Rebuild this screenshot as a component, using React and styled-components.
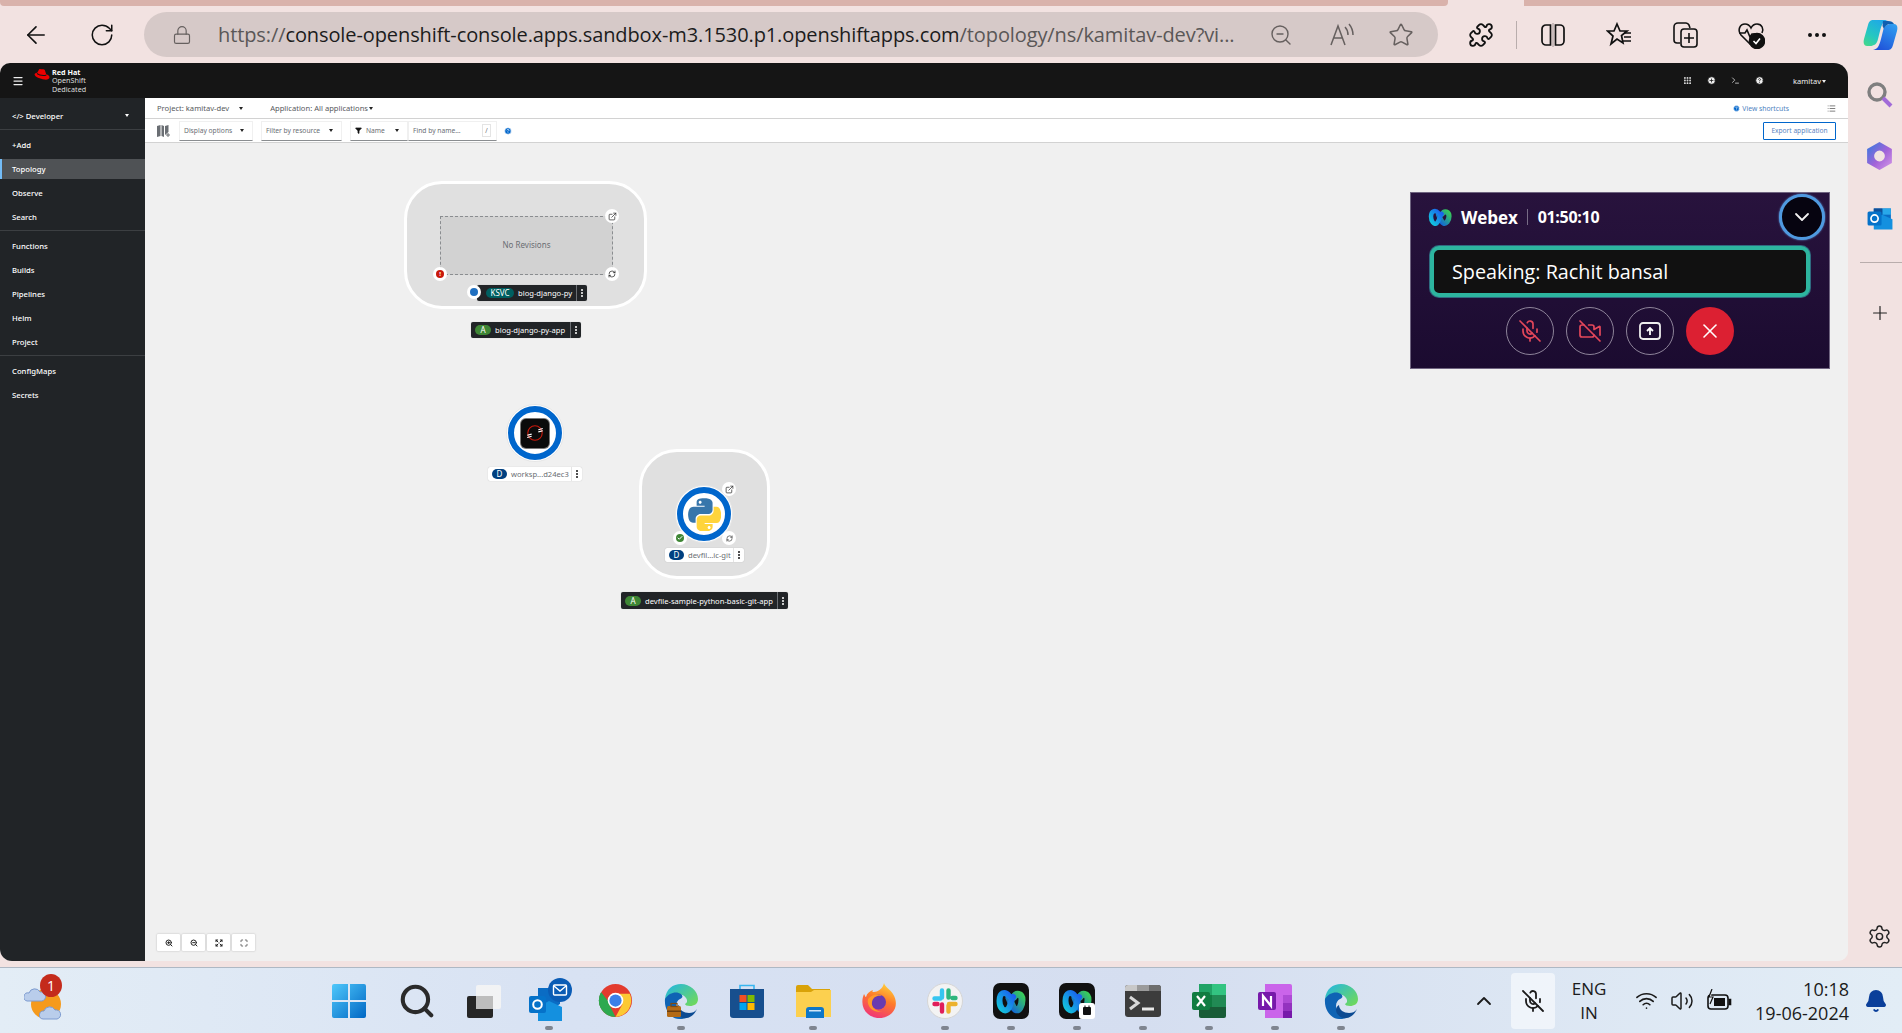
import React from 'react';
import styled, { createGlobalStyle } from 'styled-components';
import {
  ArrowLeft, RotateCw, Lock, ZoomOut, Star, Puzzle, MoreHorizontal, Search, Plus, Settings,
  ChevronDown, ChevronUp, MicOff, VideoOff, X, Wifi, Volume2, Bell, ExternalLink, Filter, Menu,
  Grip, CirclePlus, CircleHelp, Terminal, ZoomIn, Expand, Maximize, List, Check, RefreshCw,
} from 'lucide-react';

const GlobalStyle = createGlobalStyle`
  html, body { margin: 0; padding: 0; background: #f2e2e1; }
  * { box-sizing: border-box; }
  body { font-family: "Noto Sans", sans-serif; }
`;

const CONSOLE_FONT = `"Noto Sans", "Liberation Sans", sans-serif`;
const WIN_FONT = `"Open Sans", "Noto Sans", sans-serif`;

const Page = styled.div`
  width: 1902px;
  height: 1033px;
  display: flex;
  flex-direction: column;
  overflow: hidden;
  background: #f2e2e1;
`;

const TabStrip = styled.div`
  height: 6px;
  display: flex;
  justify-content: space-between;
  flex: none;
`;

const TabPiece = styled.div`
  width: ${p => p.$w}px;
  background: #d9b2ab;
  border-bottom-left-radius: ${p => (p.$left ? 4 : 0)}px;
  border-bottom-right-radius: ${p => (p.$left ? 4 : 0)}px;
`;

const BrowserBar = styled.div`
  height: 57px;
  flex: none;
  display: flex;
  align-items: center;
  padding: 0 0 0 3px;
  color: #111;
`;

const BarSlot = styled.div`
  width: ${p => p.$w || 66}px;
  height: 44px;
  flex: none;
  display: flex;
  align-items: center;
  justify-content: center;
`;

const AddressBar = styled.div`
  width: 1294px;
  height: 45px;
  margin: 0 10px 0 9px;
  flex: none;
  border-radius: 23px;
  background: #d6c9c8;
  display: flex;
  align-items: center;
  padding: 0 7px 0 28px;
  color: #66605f;
`;

const Url = styled.div`
  flex: 1;
  min-width: 0;
  padding-left: 26px;
  font: 20px ${WIN_FONT};
  letter-spacing: -0.1px;
  white-space: nowrap;
  color: #5a5757;
  span { color: #1c1c1c; }
`;

const BarDivider = styled.div`
  width: 1px;
  height: 28px;
  margin: 0 3px 0 2px;
  background: #b9adac;
  flex: none;
`;

const MainRow = styled.div`
  flex: 1;
  display: flex;
  min-height: 0;
`;

const ConsoleWindow = styled.div`
  width: 1848px;
  height: 898px;
  flex: none;
  display: flex;
  flex-direction: column;
  border-radius: 10px 14px 10px 12px;
  overflow: hidden;
  background: #f0f0f0;
  font-family: ${CONSOLE_FONT};
`;

const Masthead = styled.header`
  height: 35px;
  flex: none;
  background: #151515;
  color: #e8e8e8;
  display: flex;
  align-items: center;
  padding: 0 12px;
`;

const BrandRow = styled.div`
  display: flex;
  align-items: flex-start;
  margin-left: 10px;
`;

const BrandText = styled.div`
  display: flex;
  flex-direction: column;
  font-size: 7.2px;
  line-height: 8.4px;
  margin-left: 2px;
  color: #ddd;
  b { color: #fff; font-weight: 700; }
`;

const MastTools = styled.div`
  margin-left: auto;
  display: flex;
  align-items: center;
  gap: 15px;
  padding-right: 10px;
`;

const UserMenu = styled.div`
  margin-left: 14px;
  font-size: 7.5px;
  color: #eee;
`;

const ConsoleBody = styled.div`
  flex: 1;
  display: flex;
  min-height: 0;
`;

const SideNav = styled.nav`
  width: 145px;
  flex: none;
  background: #212427;
  color: #fff;
  font-size: 7.7px;
  font-weight: 500;
`;

const Perspective = styled.div`
  height: 32px;
  display: flex;
  align-items: center;
  justify-content: space-between;
  padding: 4px 16px 0 12px;
  border-bottom: 1px solid #3c3f42;
`;

const NavGroup = styled.div`
  padding: 3px 0 1px;
  border-bottom: ${p => (p.$last ? 'none' : '1px solid #3c3f42')};
`;

const NavItem = styled.div`
  height: 24px;
  display: flex;
  align-items: center;
  padding-left: 12px;
  ${p => p.$active && `
    height: 20px;
    margin: 2px 0;
    background: #4f5255;
    box-shadow: inset 2px 0 0 #73bcf7;
  `}
`;

const Workspace = styled.main`
  flex: 1;
  display: flex;
  flex-direction: column;
  min-width: 0;
`;

const ProjectBar = styled.div`
  height: 21px;
  flex: none;
  background: #fff;
  border-bottom: 1px solid #d2d2d2;
  display: flex;
  align-items: center;
  padding: 0 12px 0 12px;
  font-size: 7.6px;
  color: #56595d;
`;

const Caret = styled.span`
  display: inline-block;
  width: 0;
  height: 0;
  margin-left: ${p => p.$ml || 6}px;
  border: 2.5px solid transparent;
  border-top: 3px solid ${p => p.$color || '#222'};
  border-bottom: 0;
  vertical-align: middle;
`;

const AppSelect = styled.div`
  margin-left: 27px;
`;

const Shortcuts = styled.div`
  margin-left: auto;
  display: flex;
  align-items: center;
  gap: 2px;
  color: #4c7fc0;
  font-size: 6.8px;
  margin-right: 38px;
`;

const ToolBar = styled.div`
  height: 24px;
  flex: none;
  background: #fff;
  border-bottom: 1px solid #d2d2d2;
  display: flex;
  align-items: center;
  padding: 0 12px 0 12px;
  font-size: 6.7px;
  color: #6a6e73;
`;

const Select = styled.div`
  width: ${p => p.$w}px;
  height: 20px;
  flex: none;
  margin-left: ${p => p.$ml || 0}px;
  display: flex;
  align-items: center;
  justify-content: space-between;
  padding: 0 8px 0 4px;
  border: 1px solid #f0f0f0;
  border-bottom: 1px solid #8a8d90;
  white-space: nowrap;
`;

const NameSelect = styled(Select)`
  justify-content: flex-start;
  gap: 4px;
  color: #6a6e73;
`;

const SearchInput = styled(Select)`
  padding-right: 5px;
  border-bottom-color: #8a8d90;
`;

const SlashKey = styled.span`
  border: 1px solid #e4e4e4;
  width: 9px;
  height: 13px;
  font-size: 6.5px;
  text-align: center;
  line-height: 12px;
`;

const InfoIcon = styled(CircleHelp)`
  margin-left: 7px;
  flex: none;
`;

const ExportButton = styled.div`
  margin-left: auto;
  width: 73px;
  height: 18px;
  border: 1px solid #06c;
  border-radius: 1px;
  color: #5a83c0;
  font-size: 6.6px;
  display: flex;
  align-items: center;
  justify-content: center;
`;

const Canvas = styled.div`
  position: relative;
  flex: 1;
  background: #f0f0f0;
`;

const GroupBox = styled.div`
  position: absolute;
  left: ${p => p.$x}px;
  top: ${p => p.$y}px;
  width: ${p => p.$w}px;
  height: ${p => p.$h}px;
  background: #e0e0e0;
  border: 3px solid #fff;
  border-radius: 38px;
`;

const NoRevisions = styled.div`
  position: absolute;
  left: ${p => p.$x}px;
  top: ${p => p.$y}px;
  width: 173px;
  height: 59px;
  background: #d2d2d2;
  border: 1.5px dashed #8a8d90;
  display: flex;
  align-items: center;
  justify-content: center;
  padding-bottom: 2px;
  font-size: 8px;
  color: #6a6e73;
`;

const Decorator = styled.div`
  position: absolute;
  left: ${p => p.$x - 7}px;
  top: ${p => p.$y - 7}px;
  width: 14px;
  height: 14px;
  border-radius: 50%;
  background: #fff;
  display: flex;
  align-items: center;
  justify-content: center;
  color: #333;
`;

const StatusDot = styled.span`
  width: 8px;
  height: 8px;
  border-radius: 50%;
  background: ${p => p.$color};
  color: #fff;
  font-size: 6px;
  font-weight: 700;
  line-height: 8px;
  text-align: center;
  display: flex;
  align-items: center;
  justify-content: center;
`;

const NodeLabel = styled.div`
  position: absolute;
  left: ${p => p.$x}px;
  top: ${p => p.$y}px;
  width: ${p => p.$w}px;
  height: ${p => p.$h || 15}px;
  display: flex;
  align-items: center;
  padding-left: ${p => p.$pad || 4}px;
  border-radius: 2px;
  font-size: 7.6px;
  white-space: nowrap;
  background: ${p => (p.$dark ? '#212427' : '#fff')};
  color: ${p => (p.$dark ? '#fff' : '#6a6e73')};
  box-shadow: 0 0 1px rgba(0, 0, 0, 0.25);
`;

const Badge = styled.span`
  width: ${p => p.$w || 15}px;
  height: 10px;
  flex: none;
  border-radius: 6px;
  background: ${p => p.$color};
  color: #fff;
  font-size: 8px;
  line-height: 10px;
  text-align: center;
  margin-right: 4px;
`;

const Kebab = styled.span`
  margin-left: auto;
  width: 11px;
  height: 100%;
  flex: none;
  border-left: 1px solid ${p => (p.$dark ? '#6a6e73' : '#e4e4e4')};
  display: flex;
  flex-direction: column;
  align-items: center;
  justify-content: center;
  gap: 1px;
  i {
    width: 2px;
    height: 2px;
    background: ${p => (p.$dark ? '#fff' : '#151515')};
    border-radius: 50%;
  }
`;

const WorkloadRing = styled.div`
  position: absolute;
  left: ${p => p.$x - 29}px;
  top: ${p => p.$y - 29}px;
  width: 58px;
  height: 58px;
  border-radius: 50%;
  background: #fff;
  border: 1px solid #e6e6e6;
  display: flex;
  align-items: center;
  justify-content: center;
  &::before {
    content: '';
    position: absolute;
    inset: 1px;
    border-radius: 50%;
    border: 6px solid #06c;
  }
`;

const BlackTile = styled.div`
  width: 28px;
  height: 29px;
  border-radius: 5px;
  background: #0b0b0b;
  box-shadow: 0 0 0 1px #777;
  display: flex;
  align-items: center;
  justify-content: center;
`;

const ZoomControls = styled.div`
  position: absolute;
  left: 12px;
  bottom: 10px;
  display: flex;
  gap: 2px;
`;

const ZoomButton = styled.div`
  width: 23px;
  height: 17px;
  background: #fff;
  border-radius: 1px;
  box-shadow: 0 0 2px rgba(0, 0, 0, 0.25);
  display: flex;
  align-items: center;
  justify-content: center;
  color: #222;
`;

const WebexPanel = styled.section`
  position: absolute;
  left: 1265px;
  top: 49px;
  width: 420px;
  height: 177px;
  border: 1.5px solid #6f6480;
  background: linear-gradient(180deg, #28133d, #1b0b30);
  color: #fff;
  font-family: ${WIN_FONT};
  padding: 0 17px;
`;

const WebexHead = styled.div`
  height: 48px;
  display: flex;
  align-items: center;
`;

const WebexTitle = styled.span`
  font-size: 17px;
  font-weight: 700;
  margin-left: 9px;
  letter-spacing: -0.1px;
`;

const WebexTime = styled.span`
  font-size: 16px;
  font-weight: 700;
  letter-spacing: -0.3px;
`;

const WebexSep = styled.span`
  width: 1px;
  height: 16px;
  background: #776c86;
  margin: 0 10px 0 9px;
`;

const CollapseButton = styled.div`
  margin-left: auto;
  margin-right: -13px;
  width: 46px;
  height: 46px;
  border-radius: 50%;
  background: #060410;
  border: 3px solid #4f9ae0;
  box-shadow: 0 0 2px #66aef0;
  display: flex;
  align-items: center;
  justify-content: center;
`;

const SpeakingBox = styled.div`
  height: 51px;
  margin: 5px 2px 0;
  border-radius: 9px;
  border: 4px solid #2db59f;
  box-shadow: 0 0 0 1px #2f6b80;
  background: #111;
  display: flex;
  align-items: center;
  padding-left: 18px;
  font-size: 19.8px;
`;

const CallControls = styled.div`
  margin-top: 10px;
  display: flex;
  justify-content: center;
  gap: 12px;
`;

const CallButton = styled.div`
  width: 48px;
  height: 48px;
  border-radius: 50%;
  border: ${p => (p.$end ? 'none' : '1.5px solid #8d8399')};
  background: ${p => (p.$end ? '#dc2032' : 'transparent')};
  color: ${p => p.$color || '#fff'};
  display: flex;
  align-items: center;
  justify-content: center;
`;

const EdgeRail = styled.aside`
  flex: 1;
  display: flex;
  flex-direction: column;
  align-items: center;
  padding-top: 1px;
  color: #222;
`;

const RailSlot = styled.div`
  width: 100%;
  height: ${p => p.$h || 61}px;
  display: flex;
  align-items: center;
  justify-content: center;
  padding-left: 9px;
`;

const RailLine = styled.div`
  width: 42px;
  height: 1px;
  align-self: flex-end;
  margin: 15px 0 19px;
  background: #b9adac;
`;

const RailGear = styled(RailSlot)`
  margin-top: auto;
  margin-bottom: 11px;
`;

const Taskbar = styled.footer`
  height: 66px;
  flex: none;
  border-top: 1px solid #aeb8c4;
  background: linear-gradient(90deg, #e3edf6 0%, #d8e2f3 30%, #d5def0 60%, #dce6f3 80%, #e2edf6 100%);
  display: flex;
  align-items: center;
  position: relative;
  font-family: ${WIN_FONT};
  color: #1b1b1b;
`;

const WeatherSlot = styled.div`
  width: 316px;
  flex: none;
  padding-left: 24px;
  display: flex;
`;

const WeatherIcon = styled.div`
  position: relative;
  width: 42px;
  height: 44px;
`;

const NoticeBadge = styled.span`
  position: absolute;
  left: 16px;
  top: -5px;
  width: 22px;
  height: 23px;
  border-radius: 50%;
  background: #c42b1c;
  color: #fff;
  font-size: 14px;
  text-align: center;
  line-height: 23px;
`;

const TaskSlot = styled.div`
  position: relative;
  width: 66px;
  height: 100%;
  flex: none;
  margin-right: ${p => p.$gap || 0}px;
  display: flex;
  align-items: center;
  justify-content: center;
  ${p => p.$running && `
    &::after {
      content: '';
      position: absolute;
      bottom: 3px;
      left: 29px;
      width: 8px;
      height: 4px;
      border-radius: 2px;
      background: #7f8590;
    }
  `}
`;

const Tray = styled.div`
  margin-left: auto;
  height: 100%;
  display: flex;
  align-items: center;
`;

const TrayChevron = styled.div`
  margin-right: 15px;
  display: flex;
`;

const MicBox = styled.div`
  width: 44px;
  height: 56px;
  background: rgba(255, 255, 255, 0.55);
  border-radius: 4px;
  display: flex;
  align-items: center;
  justify-content: center;
`;

const LangBox = styled.div`
  width: 64px;
  text-align: center;
  font-size: 17px;
  line-height: 24px;
  margin-left: 2px;
`;

const TrayIcons = styled.div`
  display: flex;
  align-items: center;
  gap: 12px;
  margin-left: 14px;
`;

const Clock = styled.div`
  width: 112px;
  margin-left: 5px;
  text-align: right;
  font-size: 18px;
  line-height: 24px;
  white-space: nowrap;
`;

const BellSlot = styled.div`
  width: 53px;
  display: flex;
  justify-content: center;
  color: #0a3f9a;
`;

const WebexLogo = ({ size = 24, id = 'wx' }) => (
  <svg width={size} height={size * 0.78} viewBox="0 0 32 25" fill="none">
    <defs>
      <linearGradient id={`${id}a`} x1="0" y1="1" x2="1" y2="0">
        <stop offset="0" stopColor="#12c8dc" />
        <stop offset="1" stopColor="#1a5cf0" />
      </linearGradient>
      <linearGradient id={`${id}b`} x1="0" y1="1" x2="1" y2="0">
        <stop offset="0" stopColor="#1060e0" />
        <stop offset="1" stopColor="#36c85a" />
      </linearGradient>
    </defs>
    <path d="M19 8C22 3 28 5 28 11C28 17 24 21.500 20.500 20C17.500 18.500 16 13 14 9" stroke={`url(#${id}b)`} strokeWidth="7" strokeLinecap="round" />
    <path d="M14 7C10 2 4 3.500 4 11.500C4 18 8 22.500 11.500 20.500C14.500 18.500 15 12 18 8" stroke={`url(#${id}a)`} strokeWidth="6" strokeLinecap="round" />
  </svg>
);

const PythonLogo = () => (
  <svg width="33" height="33" viewBox="0 0 110 110">
    <path fill="#3776ab" d="M54.900.9c-4.600 0-9 .4-12.800 1.100C30.800 4 28.800 8.200 28.800 15.900v10.200h26.600v3.400H18.800c-7.700 0-14.500 4.600-16.600 13.400C-.3 53-.4 59.100 2.200 69.200c1.900 7.500 6.400 12.900 14.100 12.900h9.100V69.900c0-8.800 7.600-16.600 16.600-16.600h26.600c7.400 0 13.300-6.100 13.300-13.500V15.900c0-7.200-6.100-12.600-13.300-13.800C64 1.300 59.500.9 54.900.9zM40.500 9.100c2.700 0 5 2.300 5 5 0 2.800-2.200 5-5 5s-5-2.200-5-5c0-2.800 2.200-5 5-5z" />
    <path fill="#ffd43b" d="M85.400 29.500v11.800c0 9.200-7.800 16.900-16.600 16.900H42.200c-7.300 0-13.300 6.200-13.300 13.500v25.300c0 7.200 6.300 11.400 13.300 13.500 8.400 2.500 16.500 2.900 26.600 0 6.700-1.900 13.300-5.800 13.300-13.500V86.900H55.500v-3.400h39.900c7.700 0 10.600-5.400 13.300-13.500 2.800-8.300 2.700-16.300 0-27-1.900-7.700-5.600-13.500-13.300-13.500H85.400zM70.400 93.500c2.800 0 5 2.200 5 5s-2.300 5-5 5c-2.800 0-5-2.300-5-5 0-2.800 2.300-5 5-5z" />
  </svg>
);

const RedHatLogo = () => (
  <svg width="16" height="14" viewBox="0 0 16 14">
    <path fill="#e00" d="M5 1.500C6 .5 7 1.300 8 1.300S10 .8 10.800 2l1.400 4.300c2 .8 3.300 1.700 3.300 3 0 1.800-2.300 2.700-5.200 2.300C6.500 11 .6 8.800.6 6.500c0-.4.200-.9.400-1.100l2.400-.9z" />
    <path fill="#151515" d="M3.200 5c2 1.500 6 2.800 9 1.500l.3 1c-3 1.300-7.500.2-9.800-1.400z" />
  </svg>
);

const OutlookLogo = ({ size = 36 }) => (
  <svg width={size} height={size} viewBox="0 0 36 36">
    <path fill="#0a6cc4" d="M10 7h22v14l-11 7-11-7z" />
    <path fill="#28a8ea" d="M21 7h11v8H21z" />
    <path fill="#0f4f98" d="M10 7h11v8H10z" />
    <path fill="#1490df" d="M10 21l11-6 13 6v13H10z" />
    <rect x="2" y="11" width="18" height="18" rx="2" fill="#0572c9" />
    <circle cx="11" cy="20" r="4.600" fill="none" stroke="#fff" strokeWidth="2.200" />
  </svg>
);

const ChromeLogo = () => (
  <svg width="35" height="35" viewBox="0 0 36 36">
    <circle cx="18" cy="18" r="17" fill="#e33b2e" />
    <path fill="#2da94f" d="M18 18 3.300 26.500A17 17 0 0 1 3.300 9.500L10 18z" />
    <path fill="#2da94f" d="M3 9.800 12 23l6 12A17 17 0 0 1 3 9.800z" />
    <path fill="#fcc934" d="M18 11h14.700A17 17 0 0 1 18 35l7-13z" />
    <circle cx="18" cy="18" r="8" fill="#fff" />
    <circle cx="18" cy="18" r="6.300" fill="#3b7fe8" />
  </svg>
);

const EdgeLogo = ({ work }) => (
  <svg width="36" height="36" viewBox="0 0 36 36">
    <defs>
      <linearGradient id={work ? 'edw' : 'ed'} x1="0" y1="0" x2="1" y2="0.8">
        <stop offset="0" stopColor="#1fb5e8" />
        <stop offset="1" stopColor="#6ed85e" />
      </linearGradient>
    </defs>
    <path fill={`url(#${work ? 'edw' : 'ed'})`} d="M2 16C3 6 10 1 18 1c9 0 17 7 17 15 0 5-4 7-8 7-3 0-5-1-5-2 2-1 3-3 1-6-2-4-9-5-13-2-4 2-7 7-8 3z" />
    <path fill="#0f63b4" d="M2 16c4-7 12-8 16-5 2 2 2 4-1 5-4 2-6 8-1 14 2 2 4 4 7 5-3 1-5 1-7 1C8 36 1 27 2 16z" />
    <path fill="#0c4a92" d="M16 22c0 5 5 8 10 8 3 0 6-1 8-4-3 7-9 10-14 9-6-2-10-9-4-13z" />
    {work && (
      <g>
        <rect x="4" y="23" width="14" height="11" rx="1.500" fill="#b36a16" />
        <rect x="8" y="20.500" width="6" height="3" fill="none" stroke="#7c4a12" strokeWidth="1.200" />
        <rect x="4" y="27.500" width="14" height="1.500" fill="#6b3f10" />
      </g>
    )}
  </svg>
);

const WindowsLogo = () => (
  <svg width="36" height="36" viewBox="0 0 36 36">
    <defs>
      <linearGradient id="wn" x1="0" y1="0" x2="1" y2="1">
        <stop offset="0" stopColor="#4fc8fb" />
        <stop offset="1" stopColor="#0067c4" />
      </linearGradient>
    </defs>
    <path fill="url(#wn)" d="M1 3a2 2 0 0 1 2-2h14v16H1zM19 1h14a2 2 0 0 1 2 2v14H19zM1 19h16v16H3a2 2 0 0 1-2-2zM19 19h16v14a2 2 0 0 1-2 2H19z" />
  </svg>
);

const TaskViewLogo = () => (
  <svg width="36" height="36" viewBox="0 0 36 36">
    <rect x="2" y="13" width="26" height="22" rx="2" fill="#262626" />
    <rect x="11" y="2" width="25" height="24" rx="2" fill="#f4f4f4" opacity="0.92" />
    <rect x="11" y="13" width="17" height="13" fill="#bdbdbd" />
  </svg>
);

const StoreLogo = () => (
  <svg width="36" height="36" viewBox="0 0 36 36">
    <path d="M11 6V2.500h14V6" fill="none" stroke="#38b6f0" strokeWidth="1.600" />
    <path fill="#174f8e" d="M1 6h34v26a3 3 0 0 1-3 3H4a3 3 0 0 1-3-3z" />
    <rect x="10.500" y="12" width="7" height="7" fill="#f25022" />
    <rect x="18.500" y="12" width="7" height="7" fill="#7fba00" />
    <rect x="10.500" y="20" width="7" height="7" fill="#00a4ef" />
    <rect x="18.500" y="20" width="7" height="7" fill="#ffb900" />
  </svg>
);

const FolderLogo = () => (
  <svg width="37" height="36" viewBox="0 0 37 36">
    <path fill="#d9a208" d="M1 4a2 2 0 0 1 2-2h10l4 4h18v8H1z" />
    <path fill="#fcd04f" d="M1 9h15l3-2h17v27H1z" />
    <path fill="#0f77c8" d="M11 35V27a3 3 0 0 1 3-3h12a3 3 0 0 1 3 3v8z" />
    <rect x="14" y="27" width="12" height="1.500" fill="#cfe6f8" />
  </svg>
);

const FirefoxLogo = () => (
  <svg width="36" height="36" viewBox="0 0 36 36">
    <defs>
      <linearGradient id="ff" x1="0.7" y1="0" x2="0.3" y2="1">
        <stop offset="0" stopColor="#ffd23a" />
        <stop offset="0.45" stopColor="#ff7a2a" />
        <stop offset="1" stopColor="#f0337a" />
      </linearGradient>
    </defs>
    <path fill="url(#ff)" d="M23 0c1 4 6 6 9 11 4 6 4 14-1 19-6 6-17 7-24 1C1 26 0 18 3 11c1 1 1 3 2 3 1-4 4-6 7-7-1 2-1 2 1 2 3 0 9-3 10-9z" />
    <circle cx="17.500" cy="19" r="7.500" fill="#6a3bb0" />
    <path fill="#ff9a2a" d="M7 16c3-4 10-6 14-3-5-1-9 1-10 6s4 10 10 9c-6 3-16-3-14-12z" />
  </svg>
);

const SlackLogo = () => (
  <svg width="36" height="36" viewBox="0 0 36 36">
    <circle cx="18" cy="18" r="17.500" fill="#f3f3f3" stroke="#d5d5d5" />
    <g strokeWidth="4.400" strokeLinecap="round" fill="none">
      <path stroke="#36c5f0" d="M15 7.500v7M7.500 15.500h6" />
      <path stroke="#2eb67d" d="M21.500 7.500v7M28.500 15h-3" />
      <path stroke="#ecb22e" d="M21.500 28.500v-6M28.500 21h-6.500" />
      <path stroke="#e01e5a" d="M15 28.500v-7M7.500 21h3" />
    </g>
  </svg>
);

const WebexTile = ({ cal }) => (
  <svg width="36" height="36" viewBox="0 0 36 36">
    <rect width="36" height="36" rx="7" fill="#111" />
    <defs>
      <linearGradient id={cal ? 'tb2' : 'tb1'} x1="0" y1="1" x2="1" y2="0">
        <stop offset="0" stopColor="#1060e0" />
        <stop offset="1" stopColor="#38c95c" />
      </linearGradient>
      <linearGradient id={cal ? 'ta2' : 'ta1'} x1="0" y1="1" x2="1" y2="0">
        <stop offset="0" stopColor="#13c5dc" />
        <stop offset="1" stopColor="#1a5cf0" />
      </linearGradient>
    </defs>
    <path d="M21 14C23 10 29 10 29 17C29 23 26 28 22.500 26.500C19.500 25 18 19 16 15" fill="none" stroke={`url(#${cal ? 'tb2' : 'tb1'})`} strokeWidth="7" strokeLinecap="round" />
    <path d="M16 13C12 8 6.500 9 6.500 18C6.500 25 11 29 14.500 26.500C17.500 24.500 17.500 18 20 14" fill="none" stroke={`url(#${cal ? 'ta2' : 'ta1'})`} strokeWidth="6" strokeLinecap="round" />
    {cal && (
      <g>
        <rect x="20" y="20" width="16" height="16" rx="3" fill="#fff" />
        <rect x="24" y="24" width="8" height="8" rx="1" fill="#111" />
        <path d="M26 22.500v2M30 22.500v2" stroke="#111" />
      </g>
    )}
  </svg>
);

const TerminalLogo = () => (
  <svg width="36" height="32" viewBox="0 0 36 32">
    <rect width="36" height="32" rx="3" fill="#3c3c3c" />
    <path d="M0 3a3 3 0 0 1 3-3h9v6H0z" fill="#c8c8c8" />
    <rect x="12" width="12" height="6" fill="#9b9b9b" />
    <path d="M24 0h9a3 3 0 0 1 3 3v3H24z" fill="#6e6e6e" />
    <path d="M5 12l8 6-8 6" fill="none" stroke="#d8d8d8" strokeWidth="3" />
    <rect x="17" y="22.500" width="12" height="3" fill="#e8e8e8" />
  </svg>
);

const ExcelLogo = () => (
  <svg width="36" height="36" viewBox="0 0 36 36">
    <path fill="#21a366" d="M8 1h25a2 2 0 0 1 2 2v9H8z" />
    <rect x="21" y="1" width="14" height="11" fill="#33c481" />
    <rect x="8" y="12" width="13" height="12" fill="#107c41" />
    <rect x="21" y="12" width="14" height="12" fill="#218a54" />
    <path fill="#185c37" d="M8 24h27v9a2 2 0 0 1-2 2H10a2 2 0 0 1-2-2z" />
    <rect x="1" y="9" width="18" height="18" rx="2" fill="#107c41" />
    <path d="M6 13l8 10M14 13l-8 10" stroke="#fff" strokeWidth="2.200" />
  </svg>
);

const OneNoteLogo = () => (
  <svg width="36" height="36" viewBox="0 0 36 36">
    <path fill="#ca64ea" d="M8 1h25a2 2 0 0 1 2 2v30a2 2 0 0 1-2 2H8z" />
    <rect x="26" y="12" width="9" height="8" fill="#ae4bd5" />
    <rect x="26" y="20" width="9" height="8" fill="#9332bf" />
    <rect x="26" y="28" width="9" height="7" fill="#7719aa" />
    <rect x="1" y="9" width="18" height="18" rx="2" fill="#7719aa" />
    <path d="M6 23V13l8 10V13" fill="none" stroke="#fff" strokeWidth="2.200" />
  </svg>
);

const WeatherGlyph = () => (
  <svg width="42" height="44" viewBox="0 0 42 44">
    <circle cx="22" cy="25" r="15" fill="#f59a1c" />
    <g fill="#b9cdeb" stroke="#7d9bd0" strokeWidth="1">
      <path d="M3 22a4 4 0 0 1 2-8 6 6 0 0 1 11-1 4.500 4.500 0 0 1 2 9z" />
      <path d="M19 40a4 4 0 0 1 1-8 6 6 0 0 1 11-1 4.500 4.500 0 0 1 2 9z" />
    </g>
  </svg>
);

const OutlookTask = () => (
  <svg width="46" height="46" viewBox="0 0 46 46">
    <g transform="translate(2 8)">
      <path fill="#0a6cc4" d="M10 2h22v16l-11 7-11-7z" />
      <path fill="#1490df" d="M10 21l11-6 13 6v14H10z" />
      <rect x="1" y="10" width="17" height="17" rx="2" fill="#0572c9" />
      <circle cx="9.500" cy="18.500" r="4.300" fill="none" stroke="#fff" strokeWidth="2" />
    </g>
    <circle cx="34" cy="12" r="12" fill="#0a5cb5" />
    <rect x="27.500" y="7" width="13" height="10" rx="1" fill="none" stroke="#fff" strokeWidth="1.400" />
    <path d="M28 8l6 5 6-5" fill="none" stroke="#fff" strokeWidth="1.400" />
  </svg>
);

const Microsoft365 = () => (
  <svg width="27" height="28" viewBox="0 0 25 26">
    <defs>
      <linearGradient id="m365" x1="0" y1="0" x2="1" y2="1">
        <stop offset="0" stopColor="#2f7be0" />
        <stop offset="0.55" stopColor="#a363d8" />
        <stop offset="1" stopColor="#d79ae8" />
      </linearGradient>
    </defs>
    <path fill="url(#m365)" d="M12.500 0 24 6.500v13L12.500 26 1 19.500v-13zM12.500 8a5 5 0 1 0 0 10 5 5 0 0 0 0-10z" />
  </svg>
);

const CopilotLogo = () => (
  <svg width="35" height="34" viewBox="0 0 35 34">
    <defs>
      <linearGradient id="cpa" x1="0.7" y1="0" x2="0.1" y2="1">
        <stop offset="0" stopColor="#1fa8e8" />
        <stop offset="0.6" stopColor="#25c8c0" />
        <stop offset="1" stopColor="#44d88a" />
      </linearGradient>
      <linearGradient id="cpb" x1="0.8" y1="0" x2="0.2" y2="1">
        <stop offset="0" stopColor="#2f9cf0" />
        <stop offset="1" stopColor="#2050d8" />
      </linearGradient>
    </defs>
    <path fill="url(#cpa)" d="M10 2H25C20 3 19 6 17 13L15 21C14 26 11 28 7 28H4C1 28 0 25 1 21L5 7C6 3 8 2 10 2Z" />
    <path fill="url(#cpb)" d="M25 32H10C15 31 16 28 18 21L20 13C21 8 24 6 28 6H31C34 6 35 9 34 13L30 27C29 31 27 32 25 32Z" />
    <path fill="#0f5fb0" d="M20 3H25C28 3 30 4 31 6H28C24 6 22 8 21 11L19.500 8C19.800 6 19.800 4 20 3Z" />
  </svg>
);

const ReadAloud = () => (
  <svg width="26" height="26" viewBox="0 0 26 26" fill="none" stroke="#66605f" strokeWidth="1.500">
    <path d="M3 23l7-19 7 19M6 16h8" />
    <path d="M17 5c2 2 3 5 3 8M21 2c2.500 3 4 7 4 11" />
  </svg>
);

const SplitScreen = () => (
  <svg width="24" height="26" viewBox="0 0 24 26" fill="none" stroke="#111" strokeWidth="1.700">
    <path d="M9.500 3H5a4 4 0 0 0-4 4v12a4 4 0 0 0 4 4h4.500zM14.500 3H19a4 4 0 0 1 4 4v12a4 4 0 0 1-4 4h-4.500z" />
    <path d="M12 1v24" strokeWidth="0.800" stroke="#8a8080" />
  </svg>
);

const FavoritesIcon = () => (
  <svg width="26" height="26" viewBox="0 0 26 26" fill="none" stroke="#111" strokeWidth="1.700">
    <path d="M11 2l3 7h7l-5.500 4.500L17 21l-6-4-6 5 2-8L1.500 9H8z" />
    <path d="M18 11h7M18 15h7M16 19h9" />
  </svg>
);

const CollectionsIcon = () => (
  <svg width="26" height="28" viewBox="0 0 26 28" fill="none" stroke="#111" strokeWidth="1.600">
    <path d="M8 22H5a3 3 0 0 1-3-3L2 6a4 4 0 0 1 4-4h8a4 4 0 0 1 3 2l1 3" />
    <rect x="9" y="8" width="16" height="18" rx="3" />
    <path d="M17 12v10M12 17h10" />
  </svg>
);

const HeartCheck = () => (
  <svg width="28" height="28" viewBox="0 0 28 28" fill="none" stroke="#111" strokeWidth="1.600">
    <path d="M14 24 4 14C0 9 3 3 8 3c3 0 5 2 6 4 1-2 3-4 6-4 5 0 7 5 5 9" />
    <path d="M2 12h6l2-3 3 7 2-3h3" />
    <circle cx="20" cy="20" r="7.500" fill="#111" />
    <path d="M16.500 20l2.500 2.500 4-5" stroke="#fff" />
  </svg>
);

const BatteryIcon = () => (
  <svg width="26" height="24" viewBox="0 0 26 24" fill="none" stroke="#111" strokeWidth="1.600">
    <rect x="2" y="6" width="20" height="14" rx="3" />
    <rect x="8" y="9" width="11" height="8" fill="#111" stroke="none" />
    <path d="M22.500 10.500h2v5h-2" fill="#111" />
    <path d="M6 0 3 8h4L4 15" fill="#f2f6fa" stroke="#111" strokeWidth="1.200" />
  </svg>
);

const NAV_GROUPS = [
  [{ label: '+Add' }, { label: 'Topology', active: true }, { label: 'Observe' }, { label: 'Search' }],
  [{ label: 'Functions' }, { label: 'Builds' }, { label: 'Pipelines' }, { label: 'Helm' }, { label: 'Project' }],
  [{ label: 'ConfigMaps' }, { label: 'Secrets' }],
];

const TASK_APPS = [
  { key: 'win', icon: <WindowsLogo />, gap: 2 },
  { key: 'search', icon: <Search size={38} strokeWidth={2.6} color="#2a2a2a" /> },
  { key: 'tasks', icon: <TaskViewLogo /> },
  { key: 'outlook', icon: <OutlookTask />, running: true },
  { key: 'chrome', icon: <ChromeLogo /> },
  { key: 'edgework', icon: <EdgeLogo work />, running: true },
  { key: 'store', icon: <StoreLogo /> },
  { key: 'folder', icon: <FolderLogo />, running: true },
  { key: 'firefox', icon: <FirefoxLogo /> },
  { key: 'slack', icon: <SlackLogo />, running: true },
  { key: 'webex', icon: <WebexTile />, running: true },
  { key: 'webexcal', icon: <WebexTile cal />, running: true },
  { key: 'terminal', icon: <TerminalLogo />, running: true },
  { key: 'excel', icon: <ExcelLogo />, running: true },
  { key: 'onenote', icon: <OneNoteLogo />, running: true },
  { key: 'edge', icon: <EdgeLogo />, running: true },
];

function KebabMenu({ dark }) {
  return <Kebab $dark={dark}><i /><i /><i /></Kebab>;
}

function Topology() {
  return (
    <Canvas>
      <GroupBox $x={259} $y={38} $w={243} $h={128} />
      <NoRevisions $x={295} $y={73}>No Revisions</NoRevisions>
      <Decorator $x={467} $y={73}><ExternalLink size={9} /></Decorator>
      <Decorator $x={295} $y={131}><StatusDot $color="#c9190b">!</StatusDot></Decorator>
      <Decorator $x={467} $y={131}><RefreshCw size={8} color="#111" /></Decorator>
      <NodeLabel $dark $x={332} $y={142} $w={110} $h={16} $pad={9}>
        <Badge $color="#005f60" $w={28}>KSVC</Badge>blog-django-py<KebabMenu dark />
      </NodeLabel>
      <Decorator $x={329} $y={149}><StatusDot $color="#1f6fc0" /></Decorator>
      <NodeLabel $dark $x={326} $y={179} $w={110} $h={16}>
        <Badge $color="#3e8635" $w={16}>A</Badge>blog-django-py-app<KebabMenu dark />
      </NodeLabel>

      <WorkloadRing $x={390} $y={290}>
        <BlackTile>
          <svg width="20" height="20" viewBox="0 0 18 18" fill="none">
            <circle cx="9" cy="9" r="6.500" stroke="#c9190b" strokeWidth="1" />
            <path d="M2 11l4-1M2 13l4-1M12 6l4-1M12 8l4-1" stroke="#fff" strokeWidth="1" />
          </svg>
        </BlackTile>
      </WorkloadRing>
      <NodeLabel $x={343} $y={324} $w={94} $h={14}>
        <Badge $color="#004080">D</Badge>worksp...d24ec3<KebabMenu />
      </NodeLabel>

      <GroupBox $x={494} $y={306} $w={131} $h={130} />
      <WorkloadRing $x={559} $y={371}><PythonLogo /></WorkloadRing>
      <Decorator $x={584} $y={346}><ExternalLink size={9} /></Decorator>
      <Decorator $x={535} $y={395}><StatusDot $color="#3e8635"><Check size={6} strokeWidth={4} /></StatusDot></Decorator>
      <Decorator $x={584} $y={395}><RefreshCw size={7} color="#222" /></Decorator>
      <NodeLabel $x={520} $y={405} $w={79} $h={14}>
        <Badge $color="#004080">D</Badge>devfil...ic-git<KebabMenu />
      </NodeLabel>
      <NodeLabel $dark $x={476} $y={449} $w={167} $h={17}>
        <Badge $color="#3e8635" $w={16}>A</Badge>devfile-sample-python-basic-git-app<KebabMenu dark />
      </NodeLabel>

      <ZoomControls>
        <ZoomButton><ZoomIn size={8} strokeWidth={3} /></ZoomButton>
        <ZoomButton><ZoomOut size={8} strokeWidth={3} /></ZoomButton>
        <ZoomButton><Expand size={8} strokeWidth={3} /></ZoomButton>
        <ZoomButton><Maximize size={8} strokeWidth={2} /></ZoomButton>
      </ZoomControls>

      <WebexPanel>
        <WebexHead>
          <WebexLogo />
          <WebexTitle>Webex</WebexTitle>
          <WebexSep />
          <WebexTime>01:50:10</WebexTime>
          <CollapseButton><ChevronDown size={24} color="#f2f2f2" strokeWidth={1.8} /></CollapseButton>
        </WebexHead>
        <SpeakingBox>Speaking: Rachit bansal</SpeakingBox>
        <CallControls>
          <CallButton $color="#e3475a"><MicOff size={24} strokeWidth={1.7} /></CallButton>
          <CallButton $color="#e3475a"><VideoOff size={24} strokeWidth={1.7} /></CallButton>
          <CallButton>
            <svg width="22" height="18" viewBox="0 0 22 18" fill="none">
              <rect x="1" y="1" width="20" height="16" rx="3" stroke="#eee" strokeWidth="1.800" />
              <path d="M11 13V6M8 9l3-3 3 3" stroke="#fff" strokeWidth="1.800" />
            </svg>
          </CallButton>
          <CallButton $end><X size={24} strokeWidth={1.6} /></CallButton>
        </CallControls>
      </WebexPanel>
    </Canvas>
  );
}

function ConsolePane() {
  return (
    <ConsoleWindow>
      <Masthead>
        <Menu size={12} color="#eee" strokeWidth={2.5} />
        <BrandRow>
          <RedHatLogo />
          <BrandText>
            <b>Red Hat</b>
            <span>OpenShift</span>
            <span>Dedicated</span>
          </BrandText>
        </BrandRow>
        <MastTools>
          <Grip size={9} strokeWidth={3} />
          <CirclePlus size={9} fill="#eee" color="#151515" />
          <Terminal size={9} />
          <CircleHelp size={9} fill="#eee" color="#151515" />
          <UserMenu>kamitav<Caret $ml={1} $color="#eee" /></UserMenu>
        </MastTools>
      </Masthead>
      <ConsoleBody>
        <SideNav>
          <Perspective>
            <span>&lt;/&gt; Developer</span>
            <Caret $ml={0} $color="#fff" />
          </Perspective>
          {NAV_GROUPS.map((group, i) => (
            <NavGroup key={i} $last={i === NAV_GROUPS.length - 1}>
              {group.map(item => (
                <NavItem key={item.label} $active={item.active}>{item.label}</NavItem>
              ))}
            </NavGroup>
          ))}
        </SideNav>
        <Workspace>
          <ProjectBar>
            <span>Project: kamitav-dev<Caret $ml={10} /></span>
            <AppSelect>Application: All applications<Caret $ml={1} /></AppSelect>
            <Shortcuts>
              <CircleHelp size={7} fill="#06c" color="#fff" />View shortcuts
            </Shortcuts>
            <List size={9} color="#555" />
          </ProjectBar>
          <ToolBar>
            <svg width="14" height="14" viewBox="0 0 14 14">
              <path fill="#6a6e73" d="M0 2l3.500-1v11L0 13zM4.500 1 7 2v11l-2.500-1zM8 2l3.500-1v7L8 11z" />
              <path d="M11 9v4M9 11h4" stroke="#6a6e73" />
            </svg>
            <Select $w={74} $ml={8}>Display options<Caret $ml={0} /></Select>
            <Select $w={81} $ml={8}>Filter by resource<Caret $ml={0} /></Select>
            <NameSelect $w={58} $ml={8}>
              <Filter size={7} fill="#151515" color="#151515" />Name<Caret $ml={6} />
            </NameSelect>
            <SearchInput $w={89}>Find by name...<SlashKey>/</SlashKey></SearchInput>
            <InfoIcon size={8} fill="#06c" color="#fff" />
            <ExportButton>Export application</ExportButton>
          </ToolBar>
          <Topology />
        </Workspace>
      </ConsoleBody>
    </ConsoleWindow>
  );
}

export default function App() {
  return (
    <Page>
      <GlobalStyle />
      <TabStrip>
        <TabPiece $w={1448} $left />
        <TabPiece $w={378} />
      </TabStrip>
      <BrowserBar>
        <BarSlot><ArrowLeft size={28} strokeWidth={1.4} /></BarSlot>
        <BarSlot><RotateCw size={26} strokeWidth={1.4} /></BarSlot>
        <AddressBar>
          <Lock size={20} strokeWidth={1.4} />
          <Url>https://<span>console-openshift-console.apps.sandbox-m3.1530.p1.openshiftapps.com</span>/topology/ns/kamitav-dev?vi...</Url>
          <BarSlot $w={60}><ZoomOut size={24} strokeWidth={1.4} /></BarSlot>
          <BarSlot $w={60}><ReadAloud /></BarSlot>
          <BarSlot $w={60}><Star size={26} strokeWidth={1.4} /></BarSlot>
        </AddressBar>
        <BarSlot><Puzzle size={26} strokeWidth={1.7} /></BarSlot>
        <BarDivider />
        <BarSlot><SplitScreen /></BarSlot>
        <BarSlot><FavoritesIcon /></BarSlot>
        <BarSlot><CollectionsIcon /></BarSlot>
        <BarSlot><HeartCheck /></BarSlot>
        <BarSlot><MoreHorizontal size={24} strokeWidth={2} /></BarSlot>
        <BarSlot $w={60}><CopilotLogo /></BarSlot>
      </BrowserBar>
      <MainRow>
        <ConsolePane />
        <EdgeRail>
          <RailSlot>
            <svg width="28" height="28" viewBox="0 0 28 28" fill="none">
              <circle cx="11" cy="11" r="8" stroke="#7f7f7f" strokeWidth="3.400" />
              <path d="M17 17l8 8" stroke="#a26bd8" strokeWidth="4" />
            </svg>
          </RailSlot>
          <RailSlot><Microsoft365 /></RailSlot>
          <RailSlot><OutlookLogo size={28} /></RailSlot>
          <RailLine />
          <RailSlot><Plus size={22} strokeWidth={1.3} /></RailSlot>
          <RailGear $h={40}><Settings size={25} strokeWidth={1.4} /></RailGear>
        </EdgeRail>
      </MainRow>
      <Taskbar>
        <WeatherSlot>
          <WeatherIcon>
            <WeatherGlyph />
            <NoticeBadge>1</NoticeBadge>
          </WeatherIcon>
        </WeatherSlot>
        {TASK_APPS.map(app => (
          <TaskSlot key={app.key} $running={app.running} $gap={app.gap}>{app.icon}</TaskSlot>
        ))}
        <Tray>
          <TrayChevron><ChevronUp size={24} strokeWidth={1.8} /></TrayChevron>
          <MicBox><MicOff size={24} strokeWidth={1.8} /></MicBox>
          <LangBox>ENG<br />IN</LangBox>
          <TrayIcons>
            <Wifi size={23} strokeWidth={1.7} />
            <Volume2 size={24} strokeWidth={1.5} />
            <BatteryIcon />
          </TrayIcons>
          <Clock>10:18<br />19-06-2024</Clock>
          <BellSlot><Bell size={24} fill="#0a3f9a" /></BellSlot>
        </Tray>
      </Taskbar>
    </Page>
  );
}
